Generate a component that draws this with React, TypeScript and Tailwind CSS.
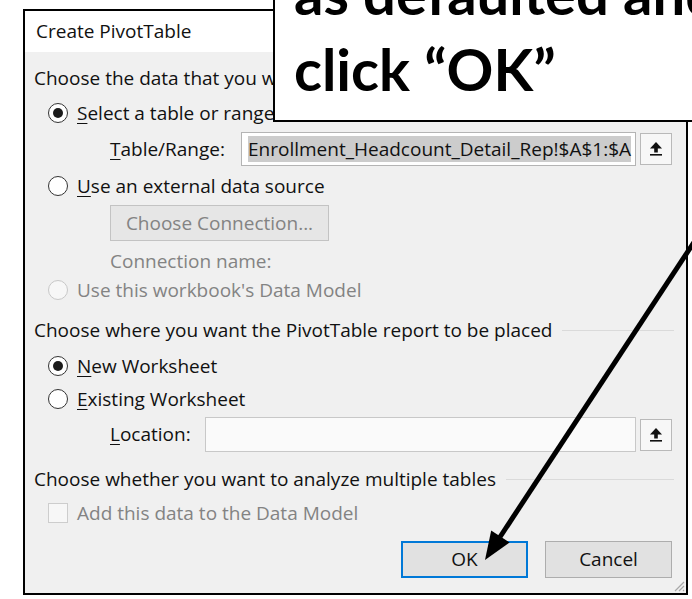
import React from "react";

const uiFont = { fontFamily: '"Open Sans", "Noto Sans", sans-serif' };
const calloutFont = { fontFamily: 'Lato, "Open Sans", sans-serif' };

function Radio({ checked = false, disabled = false }: { checked?: boolean; disabled?: boolean }) {
    return (
        <span
            className={
                "flex h-[20px] w-[20px] shrink-0 items-center justify-center rounded-full border-[1.5px] " +
                (disabled ? "border-[#c8c8c8] bg-[#f7f7f7]" : "border-[#333333] bg-white")
            }
        >
            {checked && <span className="h-[10px] w-[10px] rounded-full bg-[#1b1b1b]" />}
        </span>
    );
}

function Key({ children }: { children: React.ReactNode }) {
    return <span className="underline decoration-1 underline-offset-[3px]">{children}</span>;
}

function UploadIcon() {
    return (
        <svg width="14" height="16" viewBox="0 0 14 16">
            <polygon points="7,1 1,7.5 13,7.5" fill="#111" />
            <rect x="5.2" y="7" width="3.6" height="4.5" fill="#111" />
            <rect x="1" y="13" width="12" height="1.6" fill="#111" />
        </svg>
    );
}

function PickerButton() {
    return (
        <div className="flex h-[32px] w-[32px] shrink-0 items-center justify-center border border-[#b9b9b9] bg-[#f7f7f7]">
            <UploadIcon />
        </div>
    );
}

function GroupHeader({ title }: { title: string }) {
    return (
        <div className="flex h-[24px] items-center pr-[12px]">
            <span className="whitespace-nowrap">{title}</span>
            <span className="ml-[10px] h-px flex-1 bg-[#dadada]" />
        </div>
    );
}

export default function App() {
    return (
        <div className="relative h-[599px] w-[692px] overflow-hidden bg-white" style={uiFont}>
            {/* dialog */}
            <div className="ml-[23px] mt-[9px] flex h-[586px] w-[665px] flex-col border-2 border-black text-[19px] text-[#111]">
                <div className="flex h-[41px] shrink-0 items-center bg-white pl-[11px] text-[19px]">Create PivotTable</div>

                <div className="flex flex-1 flex-col bg-[#f0f0f0] pl-[9px]">
                    <div className="mt-[14px]">
                        <GroupHeader title="Choose the data that you want to analyze" />
                    </div>

                    <div className="mt-[11px] flex h-[24px] items-center gap-[9px] pl-[14px]">
                        <Radio checked />
                        <span>
                            <Key>S</Key>elect a table or range
                        </span>
                    </div>

                    <div className="mt-[7px] flex h-[34px] items-center pl-[76px]">
                        <span className="w-[131px] shrink-0">
                            <Key>T</Key>able/Range:
                        </span>
                        <div className="flex h-[34px] w-[395px] items-center overflow-hidden border border-[#b4b4b4] bg-white px-[6px]">
                            <span className="whitespace-nowrap bg-[#cccccc] leading-[26px]">
                                Enrollment_Headcount_Detail_Rep!$A$1:$A
                            </span>
                        </div>
                        <div className="ml-[4px]">
                            <PickerButton />
                        </div>
                    </div>

                    <div className="mt-[8px] flex h-[24px] items-center gap-[9px] pl-[14px]">
                        <Radio />
                        <span>
                            <Key>U</Key>se an external data source
                        </span>
                    </div>

                    <div className="mt-[7px] pl-[76px]">
                        <div className="flex h-[36px] w-[219px] items-center justify-center border border-[#c3c3c3] bg-[#e6e6e6] text-[#838383]">
                            Choose Connection...
                        </div>
                    </div>

                    <div className="mt-[8px] flex h-[24px] items-center pl-[76px] text-[#838383]">Connection name:</div>

                    <div className="mt-[5px] flex h-[24px] items-center gap-[9px] pl-[14px] text-[#838383]">
                        <Radio disabled />
                        <span>Use this workbook's Data Model</span>
                    </div>

                    <div className="mt-[16px]">
                        <GroupHeader title="Choose where you want the PivotTable report to be placed" />
                    </div>

                    <div className="mt-[12px] flex h-[24px] items-center gap-[9px] pl-[14px]">
                        <Radio checked />
                        <span>
                            <Key>N</Key>ew Worksheet
                        </span>
                    </div>

                    <div className="mt-[9px] flex h-[24px] items-center gap-[9px] pl-[14px]">
                        <Radio />
                        <span>
                            <Key>E</Key>xisting Worksheet
                        </span>
                    </div>

                    <div className="mt-[6px] flex h-[35px] items-center pl-[76px]">
                        <span className="w-[95px] shrink-0">
                            <Key>L</Key>ocation:
                        </span>
                        <div className="h-[35px] w-[431px] border border-[#c8c8c8] bg-[#fafafa]" />
                        <div className="ml-[4px]">
                            <PickerButton />
                        </div>
                    </div>

                    <div className="mt-[15px]">
                        <GroupHeader title="Choose whether you want to analyze multiple tables" />
                    </div>

                    <div className="mt-[10px] flex h-[24px] items-center gap-[9px] pl-[14px] text-[#838383]">
                        <span className="h-[20px] w-[20px] shrink-0 border-[1.5px] border-[#cdcdcd] bg-[#f7f7f7]" />
                        <span>Add this data to the Data Model</span>
                    </div>

                    <div className="mt-[16px] flex items-center justify-end gap-[17px] pr-[14px]">
                        <div className="flex h-[37px] w-[127px] items-center justify-center border-2 border-[#0078d7] bg-[#e1e1e1]">
                            OK
                        </div>
                        <div className="flex h-[37px] w-[127px] items-center justify-center border border-[#adadad] bg-[#e1e1e1]">
                            Cancel
                        </div>
                    </div>

                    {/* size grip */}
                    <div className="mt-auto flex justify-end pb-[1px] pr-[1px]">
                        <svg width="12" height="12" viewBox="0 0 12 12">
                            <path d="M11 2 L2 11 M11 6 L6 11 M11 10 L10 11" stroke="#a8a8a8" strokeWidth="1.2" />
                        </svg>
                    </div>
                </div>
            </div>

            {/* instruction callout */}
            <div
                className="absolute left-[273px] top-[-60px] h-[182px] w-[440px] border-2 border-black bg-white pl-[19px] pt-[13px] text-[58px] font-bold leading-[76px] text-black"
                style={calloutFont}
            >
                <div className="whitespace-nowrap">as defaulted and</div>
                <div className="whitespace-nowrap">click “OK”</div>
            </div>

            {/* pointer to OK */}
            <svg className="pointer-events-none absolute inset-0" width="692" height="599" viewBox="0 0 692 599">
                <line x1="702" y1="230" x2="500" y2="537" stroke="#000" strokeWidth="5" />
                <polygon points="485,560 509.6,542.6 491.2,530.6" fill="#000" />
            </svg>
        </div>
    );
}
